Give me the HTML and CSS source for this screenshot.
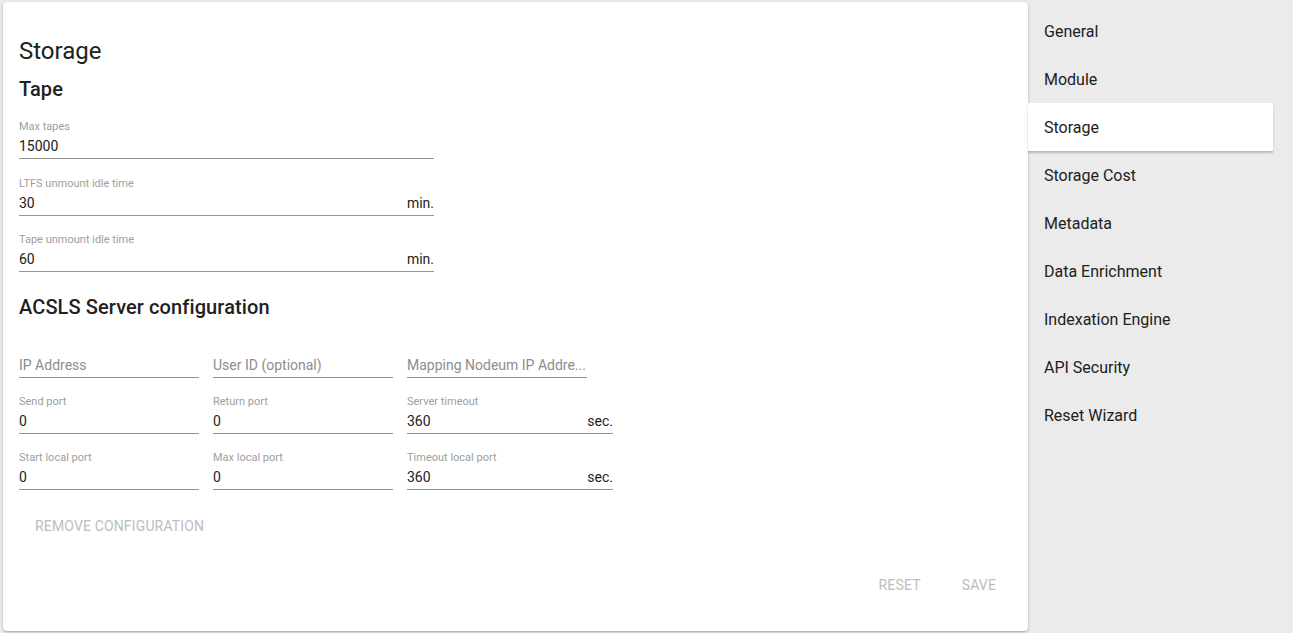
FILE: index.html
```html
<!DOCTYPE html>
<html>
<head>
<meta charset="utf-8">
<link rel="stylesheet" href="styles.css">
</head>
<body>
<div class="page">
  <main class="card">
    <h1 class="title">Storage</h1>
    <h2 class="section">Tape</h2>
    <div class="stack">
      <div class="field wide">
        <div class="label">Max tapes</div>
        <div class="value"><span>15000</span></div>
      </div>
      <div class="field wide">
        <div class="label">LTFS unmount idle time</div>
        <div class="value"><span>30</span><span class="suffix">min.</span></div>
      </div>
      <div class="field wide">
        <div class="label">Tape unmount idle time</div>
        <div class="value"><span>60</span><span class="suffix">min.</span></div>
      </div>
    </div>
    <h2 class="section acsls">ACSLS Server configuration</h2>
    <div class="grid">
      <div class="field col"><div class="label"></div><div class="value ph"><span>IP Address</span></div></div>
      <div class="field col"><div class="label"></div><div class="value ph"><span>User ID (optional)</span></div></div>
      <div class="field col"><div class="label"></div><div class="value ph"><span class="ell">Mapping Nodeum IP Addre...</span></div></div>

      <div class="field col"><div class="label">Send port</div><div class="value"><span>0</span></div></div>
      <div class="field col"><div class="label">Return port</div><div class="value"><span>0</span></div></div>
      <div class="field col3"><div class="label">Server timeout</div><div class="value"><span>360</span><span class="suffix">sec.</span></div></div>

      <div class="field col"><div class="label">Start local port</div><div class="value"><span>0</span></div></div>
      <div class="field col"><div class="label">Max local port</div><div class="value"><span>0</span></div></div>
      <div class="field col3"><div class="label">Timeout local port</div><div class="value"><span>360</span><span class="suffix">sec.</span></div></div>
    </div>
    <div class="remove-row">
      <button class="btn">Remove configuration</button>
    </div>
    <div class="actions">
      <button class="btn">Reset</button>
      <button class="btn">Save</button>
    </div>
  </main>
  <nav class="menu">
    <div class="item">General</div>
    <div class="item">Module</div>
    <div class="item active">Storage</div>
    <div class="item">Storage Cost</div>
    <div class="item">Metadata</div>
    <div class="item">Data Enrichment</div>
    <div class="item">Indexation Engine</div>
    <div class="item">API Security</div>
    <div class="item">Reset Wizard</div>
  </nav>
</div>
</body>
</html>
```
FILE: styles.css
```css
* { box-sizing: border-box; }
html, body {
  margin: 0;
  padding: 0;
  background: #ebebeb;
  font-family: Roboto, "Liberation Sans", sans-serif;
  color: rgba(0,0,0,0.87);
}
.page {
  display: flex;
  align-items: flex-start;
  height: 633px;
  overflow: hidden;
}
.card {
  margin: 2px 0 0 3px;
  width: 1025px;
  height: 629px;
  background: #fff;
  border-radius: 4px;
  box-shadow: 0 1px 3px rgba(0,0,0,0.25), 0 1px 1px rgba(0,0,0,0.08);
  padding: 33px 16px 28px 16px;
  display: flex;
  flex-direction: column;
}
.title {
  margin: 0 0 8px 0;
  font-size: 24px;
  line-height: 32px;
  font-weight: 400;
  color: #212121;
}
.section {
  margin: 0 0 17px 0;
  font-size: 20px;
  line-height: 28px;
  font-weight: 500;
  color: #212121;
  letter-spacing: 0.1px;
}
.section.acsls { margin-top: 21px; margin-bottom: 18px; }
.stack {
  display: flex;
  flex-direction: column;
  gap: 17.5px;
}
.field {
  display: flex;
  flex-direction: column;
}
.field.wide { width: 415px; }
.label {
  height: 14px;
  font-size: 11px;
  line-height: 14px;
  color: #9e9e9e;
}
.value {
  margin-top: 2px;
  display: flex;
  justify-content: space-between;
  align-items: center;
  height: 23px;
  padding-bottom: 2px;
  font-size: 14px;
  line-height: 20px;
  border-bottom: 1px solid #949494;
  color: #212121;
}
.value.ph { color: #8d8d8d; }
.ell { white-space: nowrap; }
.suffix { color: #212121; }
.grid {
  display: grid;
  grid-template-columns: 180px 180px 206px;
  column-gap: 14px;
  row-gap: 17px;
}
.field.col { width: 180px; }
.field.col3 { width: 206px; }
.remove-row {
  margin-top: 18px;
}
.btn {
  font-family: Roboto, "Liberation Sans", sans-serif;
  font-size: 14px;
  font-weight: 400;
  text-transform: uppercase;
  color: #bdbdbd;
  background: transparent;
  border: 0;
  height: 36px;
  padding: 0 16px;
  min-width: 64px;
  letter-spacing: 0.15px;
  cursor: default;
}
.actions {
  margin-top: auto;
  display: flex;
  justify-content: flex-end;
  gap: 9px;
}
.menu {
  width: 245px;
  margin-top: 7px;
  display: flex;
  flex-direction: column;
}
.item {
  height: 48px;
  line-height: 50px;
  padding-left: 16px;
  font-size: 16px;
  color: #212121;
}
.item.active {
  background: #fff;
  box-shadow: 0 2px 2px rgba(0,0,0,0.22);
}
```
